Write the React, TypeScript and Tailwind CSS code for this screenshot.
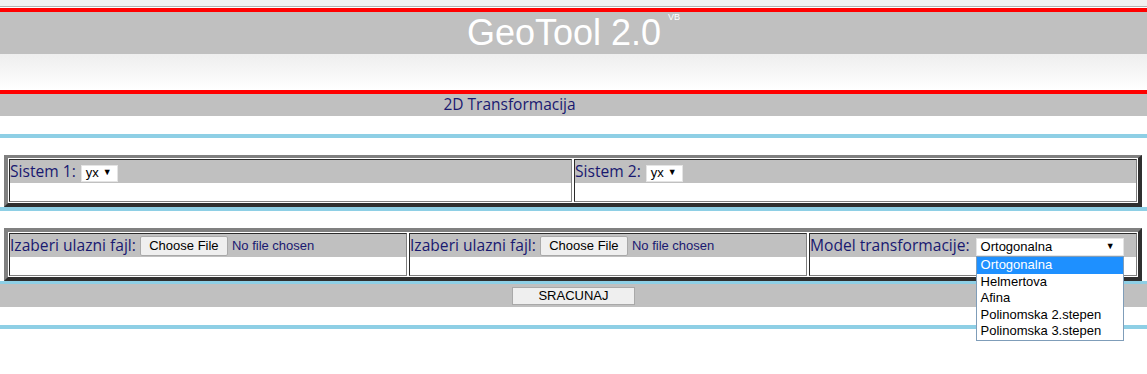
import React from "react";

const navy = "text-[#191970]";

function Cell({ children, className = "" }: { children?: React.ReactNode; className?: string }) {
  return (
    <div
      className={
        "border border-t-[#2b2b2b] border-l-[#2b2b2b] border-r-[#808080] border-b-[#808080] " +
        className
      }
    >
      <div className="h-[23px] bg-[#c0c0c0] flex items-center whitespace-nowrap">{children}</div>
      <div className="h-[18px] bg-white" />
    </div>
  );
}

function Label({ children }: { children: React.ReactNode }) {
  return <span className={"font-['Open_Sans'] text-[15.6px] leading-none " + navy}>{children}</span>;
}

function SmallSelect() {
  return (
    <span className="ml-[5px] mt-[3px] h-[17px] w-[37px] bg-white border border-[#e4e4e4] flex items-center justify-between pl-[4px] pr-[5px] font-['Liberation_Sans'] text-[13px] text-black">
      yx<span className="text-[9px]">▼</span>
    </span>
  );
}

function FileInput() {
  return (
    <span className="flex items-center ml-[4px] mt-[1px] font-['Liberation_Sans'] text-[13px]">
      <span className="h-[20px] w-[88px] flex items-center justify-center bg-[#efefef] border border-[#a9a9a9] rounded-[2px] text-black">
        Choose File
      </span>
      <span className={"ml-[4px] " + navy}>No file chosen</span>
    </span>
  );
}

const options = ["Ortogonalna", "Helmertova", "Afina", "Polinomska 2.stepen", "Polinomska 3.stepen"];

function ModelSelect() {
  return (
    <span className="relative ml-[6px] mt-[3px]">
      <span className="h-[18px] w-[148px] bg-white border border-[#e4e4e4] flex items-center justify-between pl-[4px] pr-[8px] font-['Liberation_Sans'] text-[13px] text-black">
        Ortogonalna<span className="text-[9px]">▼</span>
      </span>
      <ul className="absolute left-0 top-[18px] w-[148px] bg-white border border-[#7f9db9] font-['Liberation_Sans'] text-[13px] text-black z-10">
        {options.map((o, i) => (
          <li
            key={o}
            className={"h-[16.6px] leading-[16px] pl-[4px] " + (i === 0 ? "bg-[#1e90ff] text-white" : "")}
          >
            {o}
          </li>
        ))}
      </ul>
    </span>
  );
}

export default function App() {
  return (
    <div className="w-[1147px] min-h-[374px] bg-white">
      {/* header */}
      <div className="h-[6px] bg-[#f1f1f1]" />
      <div className="h-px bg-[#b3b3b3]" />
      <div className="h-px bg-white" />
      <div className="h-[4px] bg-[#ff0000]" />
      <div className="h-[42px] bg-[#c0c0c0] flex justify-center">
        <div className="flex items-start font-['Liberation_Sans'] text-white">
          <span className="text-[36px] leading-[42px]">GeoTool 2.0</span>
          <span className="ml-[7px] mt-[1px] text-[9px] leading-[9px]">VB</span>
        </div>
      </div>
      <div className="h-[36px] bg-gradient-to-b from-[#eeeeee] to-white" />
      <div className="h-[4px] bg-[#ff0000]" />
      <div className="h-[22px] bg-[#c0c0c0] flex items-center">
        <div className={"w-[1019px] text-center font-['Open_Sans'] text-[15.5px] " + navy}>2D Transformacija</div>
      </div>
      <div className="h-[18px]" />
      <div className="h-[4px] bg-[#8ecfe5]" />

      {/* sistemi */}
      <div className="h-[17px]" />
      <div className="ml-[4px] w-[1138px] border-4 border-t-[3px] border-t-[#808080] border-l-[#808080] border-r-[#2f2f2f] border-b-[#2f2f2f] bg-white p-px flex gap-[2px]">
        <Cell className="flex-1">
          <Label>Sistem 1:</Label>
          <SmallSelect />
        </Cell>
        <Cell className="flex-1">
          <Label>Sistem 2:</Label>
          <SmallSelect />
        </Cell>
      </div>
      <div className="h-[4px] bg-[#8ecfe5]" />

      {/* fajlovi */}
      <div className="h-[17px]" />
      <div className="ml-[4px] w-[1138px] border-4 border-t-[#808080] border-l-[#808080] border-r-[#2f2f2f] border-b-[#2f2f2f] bg-white p-px flex gap-[2px]">
        <Cell className="w-[398px]">
          <Label>Izaberi ulazni fajl:</Label>
          <FileInput />
        </Cell>
        <Cell className="w-[398px]">
          <Label>Izaberi ulazni fajl:</Label>
          <FileInput />
        </Cell>
        <Cell className="flex-1">
          <Label>Model transformacije:</Label>
          <ModelSelect />
        </Cell>
      </div>
      <div className="h-[3px] bg-[#8ecfe5]" />
      <div className="h-[23px] bg-[#c0c0c0] flex items-center justify-center">
        <button className="h-[18px] w-[123px] bg-[#efefef] border border-[#a9a9a9] font-['Liberation_Sans'] text-[13px] text-black leading-none">
          SRACUNAJ
        </button>
      </div>
      <div className="h-[18px]" />
      <div className="h-[4px] bg-[#8ecfe5]" />
    </div>
  );
}
